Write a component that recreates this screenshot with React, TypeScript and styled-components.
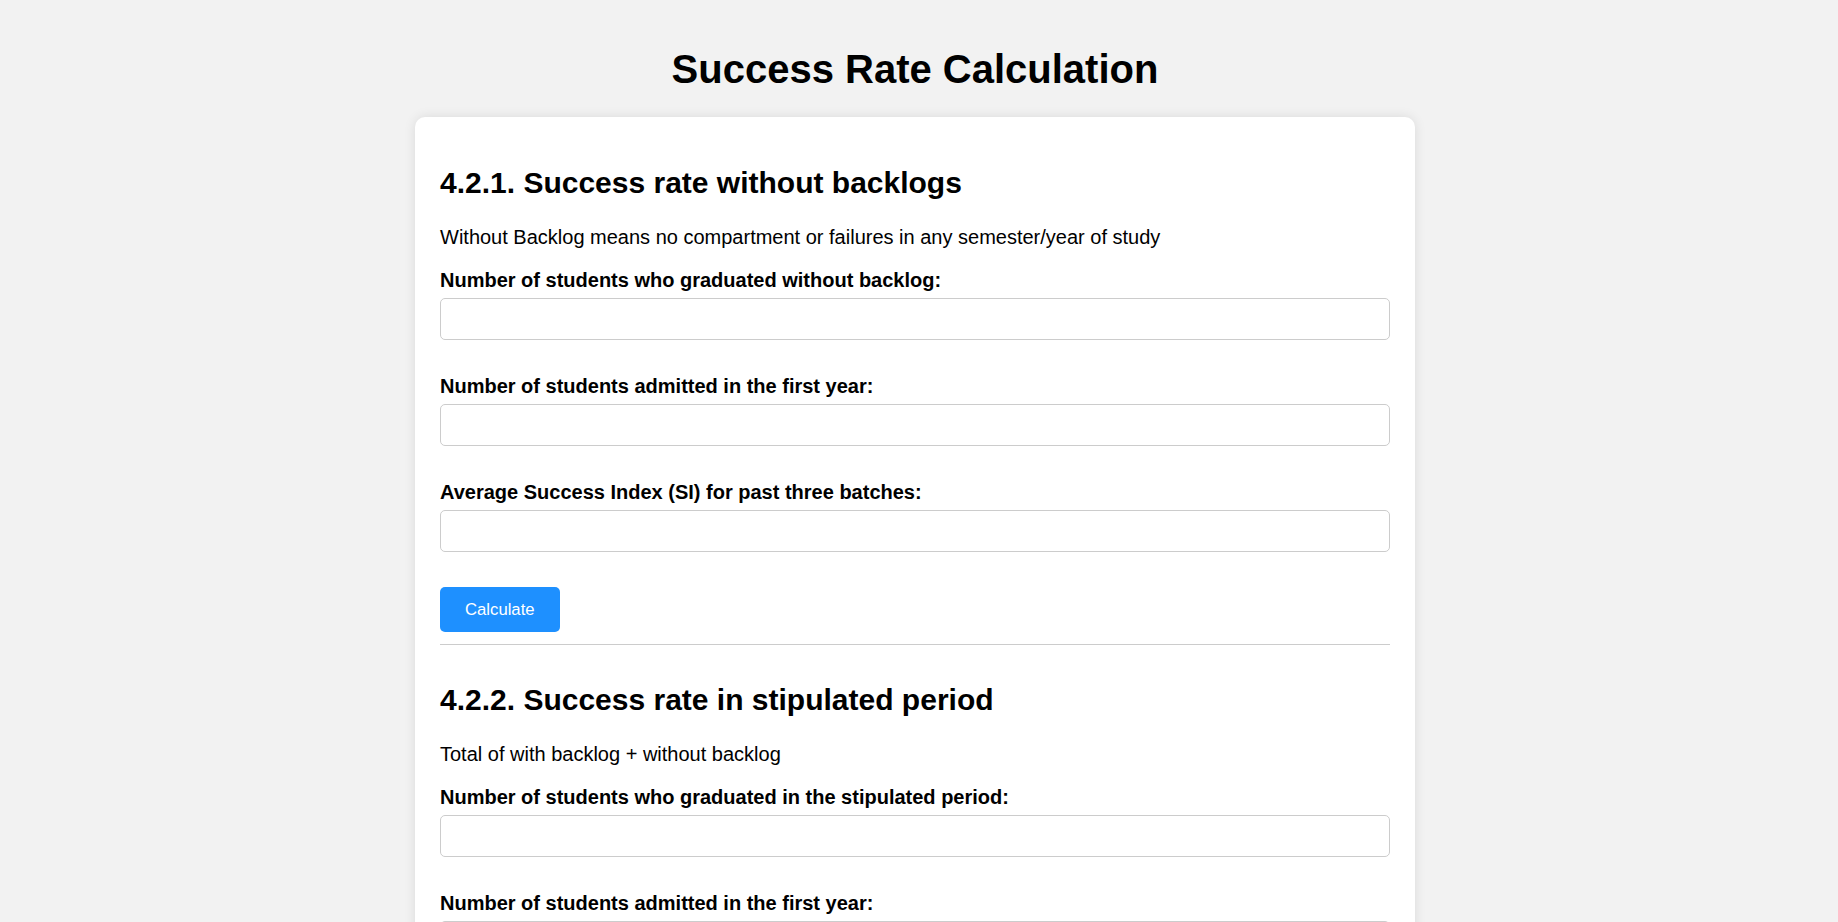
import React from "react";
import styled, { createGlobalStyle } from "styled-components";

const GlobalStyle = createGlobalStyle`
  html, body {
    margin: 0;
    padding: 0;
    background: #f2f2f2;
  }
  body {
    font-family: "Liberation Sans", Arial, Helvetica, sans-serif;
    color: #000;
  }
  * {
    box-sizing: border-box;
  }
`;

const Page = styled.div`
  padding: 46px 8px 40px 0;
`;

const Title = styled.h1`
  margin: 0 0 25px;
  font-size: 40px;
  line-height: 46px;
  font-weight: 700;
  text-align: center;
`;

const Card = styled.main`
  width: 1000px;
  margin: 0 auto;
  background: #fff;
  padding: 25px;
  border-radius: 10px;
  box-shadow: 0 0 12px rgba(0, 0, 0, 0.1);
`;

const Section = styled.section`
  display: flow-root;
`;

const SectionTitle = styled.h2`
  margin: 24px 0 26px;
  font-size: 30px;
  line-height: 34px;
  font-weight: 700;
`;

const Note = styled.p`
  margin: 0 0 20px;
  font-size: 20px;
  line-height: 23px;
`;

const Field = styled.div`
  margin-bottom: 35px;
`;

const Label = styled.label`
  display: block;
  margin-bottom: 6px;
  font-size: 20px;
  line-height: 23px;
  font-weight: 700;
`;

const Input = styled.input`
  display: block;
  width: 100%;
  height: 42px;
  padding: 10px 12px;
  border: 1px solid #ccc;
  border-radius: 5px;
  font-family: inherit;
  font-size: 16.7px;
  background: #fff;
  outline: none;
`;

const Button = styled.button`
  display: block;
  height: 45px;
  padding: 0 25px;
  border: none;
  border-radius: 5px;
  background: #1e90ff;
  color: #fff;
  font-family: inherit;
  font-size: 16.7px;
  cursor: pointer;
`;

const Divider = styled.hr`
  margin: 12px 0 14px;
  border: none;
  border-top: 1px solid #ccc;
  height: 0;
`;

type FieldDef = { id: string; label: string };

const sections: { title: string; note: string; fields: FieldDef[] }[] = [
  {
    title: "4.2.1. Success rate without backlogs",
    note: "Without Backlog means no compartment or failures in any semester/year of study",
    fields: [
      { id: "gwb", label: "Number of students who graduated without backlog:" },
      { id: "adm1", label: "Number of students admitted in the first year:" },
      { id: "si1", label: "Average Success Index (SI) for past three batches:" },
    ],
  },
  {
    title: "4.2.2. Success rate in stipulated period",
    note: "Total of with backlog + without backlog",
    fields: [
      { id: "gsp", label: "Number of students who graduated in the stipulated period:" },
      { id: "adm2", label: "Number of students admitted in the first year:" },
      { id: "si2", label: "Average Success Index (SI) for past three batches:" },
    ],
  },
];

export default function App() {
  return (
    <>
      <GlobalStyle />
      <Page>
        <Title>Success Rate Calculation</Title>
        <Card>
          {sections.map((s, i) => (
            <React.Fragment key={s.title}>
              {i > 0 && <Divider />}
              <Section>
                <SectionTitle>{s.title}</SectionTitle>
                <Note>{s.note}</Note>
                {s.fields.map((f) => (
                  <Field key={f.id}>
                    <Label htmlFor={f.id}>{f.label}</Label>
                    <Input id={f.id} type="number" />
                  </Field>
                ))}
                <Button type="button">Calculate</Button>
              </Section>
            </React.Fragment>
          ))}
        </Card>
      </Page>
    </>
  );
}
